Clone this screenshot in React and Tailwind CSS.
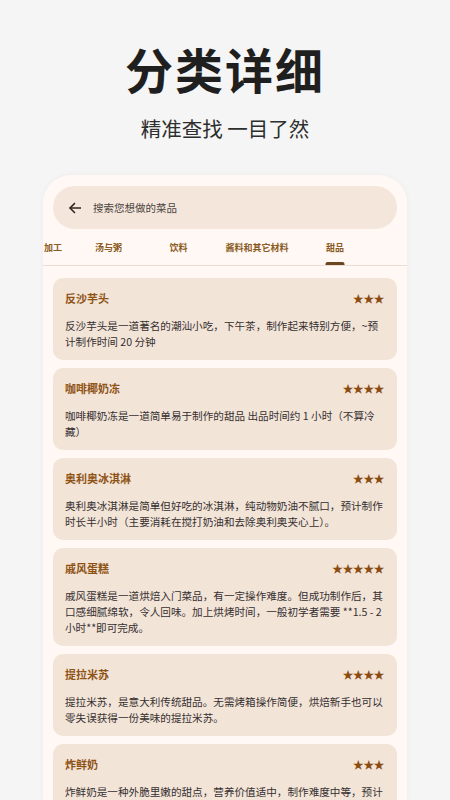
import React from "react";

const tabs = [
  { label: "加工", w: "w-[32px]" },
  { label: "汤与粥", w: "w-[79px]" },
  { label: "饮料", w: "w-[61px]" },
  { label: "酱料和其它材料", w: "w-[96px]" },
  { label: "甜品", w: "w-[60px]", active: true },
];

const items = [
  {
    title: "反沙芋头",
    stars: 3,
    desc: "反沙芋头是一道著名的潮汕小吃，下午茶，制作起来特别方便，~预计制作时间 20 分钟",
  },
  {
    title: "咖啡椰奶冻",
    stars: 4,
    desc: "咖啡椰奶冻是一道简单易于制作的甜品 出品时间约 1 小时（不算冷藏）",
  },
  {
    title: "奥利奥冰淇淋",
    stars: 3,
    desc: "奥利奥冰淇淋是简单但好吃的冰淇淋，纯动物奶油不腻口，预计制作时长半小时（主要消耗在搅打奶油和去除奥利奥夹心上）。",
  },
  {
    title: "戚风蛋糕",
    stars: 5,
    desc: "戚风蛋糕是一道烘焙入门菜品，有一定操作难度。但成功制作后，其口感细腻绵软，令人回味。加上烘烤时间，一般初学者需要 **1.5 - 2 小时**即可完成。",
  },
  {
    title: "提拉米苏",
    stars: 4,
    desc: "提拉米苏，是意大利传统甜品。无需烤箱操作简便，烘焙新手也可以零失误获得一份美味的提拉米苏。",
  },
  {
    title: "炸鲜奶",
    stars: 3,
    desc: "炸鲜奶是一种外脆里嫩的甜点，营养价值适中，制作难度中等，预计制作时间 40 分钟。",
  },
];

function ArrowLeft() {
  return (
    <svg width="14" height="14" viewBox="0 0 24 24" fill="none" stroke="#2f241f" strokeWidth="2.6" strokeLinecap="square">
      <path d="M21 12H4" />
      <path d="M11 4.5L3.5 12L11 19.5" strokeLinejoin="miter" />
    </svg>
  );
}

export default function App() {
  return (
    <div
      className="w-[450px] h-[800px] overflow-hidden bg-[#f5f5f5] flex flex-col"
      style={{ fontFamily: '"Noto Sans CJK SC", "Noto Sans", sans-serif' }}
    >
      <div className="pt-[44px] flex flex-col items-center shrink-0">
        <div className="text-[48px] leading-[48px] font-bold text-[#1f1f1f] tracking-[2px]">分类详细</div>
        <div className="mt-[26px] text-[20.5px] leading-[20px] text-[#2e2e2e]">精准查找 一目了然</div>
      </div>

      <div className="mt-[37px] ml-[43px] w-[364px] flex-1 min-h-0 bg-[#fff8f4] rounded-t-[28px] shadow-[0_0_6px_rgba(0,0,0,0.04)] overflow-hidden flex flex-col">
        <div className="shrink-0 mt-[11px] mx-[10px] h-[43px] rounded-full bg-[#f5e6dc] flex items-center pl-[15px] gap-[11px]">
          <ArrowLeft />
          <span className="text-[10.5px] text-[#4a4440]">搜索您想做的菜品</span>
        </div>

        <div className="shrink-0 relative h-[37px] flex items-stretch overflow-hidden border-b border-[#e9ddd5]">
          <div className="flex ml-[-6px] items-stretch">
            {tabs.map((t) => (
              <div key={t.label} className={`${t.w} shrink-0 relative flex items-center justify-center`}>
                <span className="text-[9px] font-bold text-[#8a5a22] mt-[2px]">{t.label}</span>
                {t.active && (
                  <div className="absolute bottom-0 left-1/2 -translate-x-1/2 w-[19px] h-[3px] rounded-t-[2px] bg-[#6b4520]" />
                )}
              </div>
            ))}
          </div>
        </div>

        <div className="shrink-0 pt-[12px] px-[10px] flex flex-col gap-[8px]">
          {items.map((it) => (
            <div key={it.title} className="rounded-[10px] bg-[#f3e4d8] pl-[12px] pr-[10px] pt-[12px] pb-[10px] shrink-0">
              <div className="flex items-center justify-between h-[16px] pr-[3px]">
                <span className="text-[11px] font-bold text-[#8e5314]">{it.title}</span>
                <span className="text-[11px] text-[#8b4c12] tracking-[-0.6px]">{"★".repeat(it.stars)}</span>
              </div>
              <p className="mt-[12px] text-[10.6px] leading-[16px] text-[#353030]">{it.desc}</p>
            </div>
          ))}
        </div>
      </div>
    </div>
  );
}
